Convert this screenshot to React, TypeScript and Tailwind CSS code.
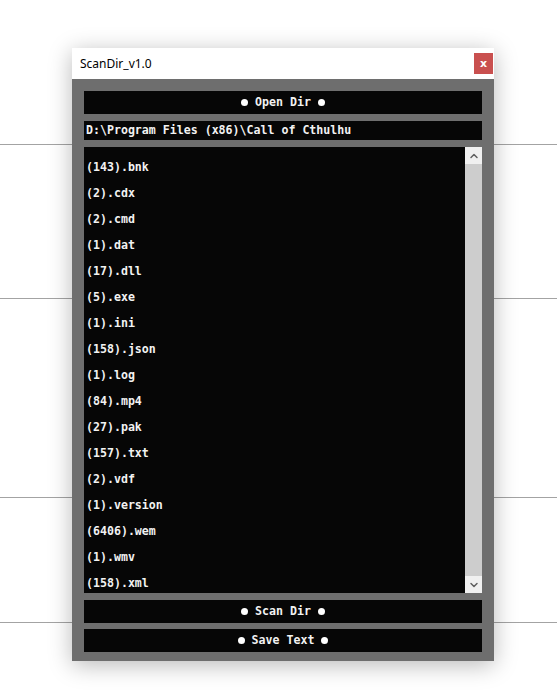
import { ChevronUp, ChevronDown } from "lucide-react";

const counts = [
  "(143).bnk",
  "(2).cdx",
  "(2).cmd",
  "(1).dat",
  "(17).dll",
  "(5).exe",
  "(1).ini",
  "(158).json",
  "(1).log",
  "(84).mp4",
  "(27).pak",
  "(157).txt",
  "(2).vdf",
  "(1).version",
  "(6406).wem",
  "(1).wmv",
  "(158).xml",
];

const mono = "font-['DejaVu_Sans_Mono',monospace] font-bold text-[11.6px]";

function ActionButton({ label }: { label: string }) {
  return (
    <button
      className={`${mono} h-[23px] w-full bg-[#060606] text-[#f2f2f2] flex items-center justify-center gap-[7px]`}
    >
      <span className="w-[7px] h-[7px] rounded-full bg-white" />
      <span>{label}</span>
      <span className="w-[7px] h-[7px] rounded-full bg-white" />
    </button>
  );
}

export default function App() {
  return (
    <div className="relative h-[697px] w-[557px] overflow-hidden bg-white">
      {/* desktop guide lines */}
      <div className="absolute left-0 right-0 top-[144px] h-px bg-[#a3a3a3]" />
      <div className="absolute left-0 right-0 top-[298px] h-px bg-[#a3a3a3]" />
      <div className="absolute left-0 right-0 top-[497px] h-px bg-[#a3a3a3]" />
      <div className="absolute left-0 right-0 top-[622px] h-px bg-[#a3a3a3]" />

      {/* app window */}
      <div className="absolute left-[72px] top-[48px] w-[422px] flex flex-col shadow-[0_4px_22px_rgba(0,0,0,0.28)]">
        <div className="h-[31px] bg-white flex items-center justify-between pl-[8px] pr-[1px]">
          <span className="font-['Noto_Sans',sans-serif] text-[12px] text-black">ScanDir_v1.0</span>
          <button className="w-[19px] h-[21px] bg-[#c9504f] text-white text-[11px] font-bold font-['DejaVu_Sans',sans-serif] flex items-center justify-center leading-none">
            x
          </button>
        </div>

        <div className="bg-[#6e6e6e] px-[12px] pt-[12px] pb-[9px] flex flex-col">
          <ActionButton label="Open Dir" />
          <div
            className={`${mono} mt-[7px] h-[19px] bg-[#060606] text-[#f2f2f2] flex items-center px-[2px] whitespace-pre`}
          >
            D:\Program Files (x86)\Call of Cthulhu
          </div>

          <div className="mt-[7px] h-[446px] flex bg-[#060606]">
            <div className="flex-1 overflow-hidden pt-[8px] pl-[2px]">
              {counts.map((c) => (
                <div key={c} className={`${mono} h-[26px] flex items-center text-[#f2f2f2]`}>
                  {c}
                </div>
              ))}
            </div>
            <div className="w-[17px] bg-[#f0f0f0] flex flex-col">
              <div className="h-[17px] flex items-center justify-center text-[#606060]">
                <ChevronUp size={12} strokeWidth={3} />
              </div>
              <div className="flex-1 bg-[#cdcdcd]" />
              <div className="h-[17px] flex items-center justify-center text-[#606060]">
                <ChevronDown size={12} strokeWidth={3} />
              </div>
            </div>
          </div>

          <div className="mt-[7px]">
            <ActionButton label="Scan Dir" />
          </div>
          <div className="mt-[6px]">
            <ActionButton label="Save Text" />
          </div>
        </div>
      </div>
    </div>
  );
}
